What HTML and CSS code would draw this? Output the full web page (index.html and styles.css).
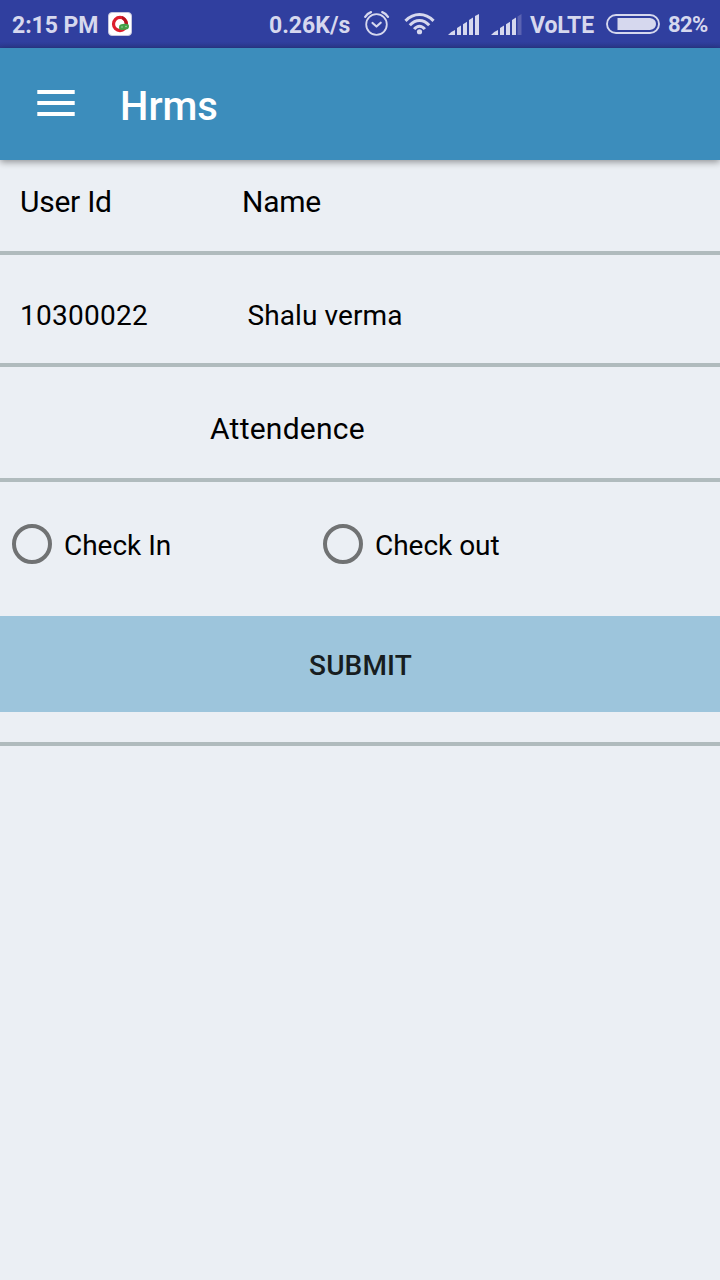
FILE: index.html
```html
<!DOCTYPE html>
<html lang="en">
<head>
<meta charset="utf-8">
<title>Hrms</title>
<link rel="stylesheet" href="styles.css">
</head>
<body>
<div class="status">
  <span class="time">2:15 PM</span>
  <svg class="opera" width="24" height="24" viewBox="0 0 24 24">
    <rect x=".5" y=".5" width="23" height="23" rx="3.5" fill="#fff" stroke="#c5c6de"/>
    <ellipse cx="12" cy="12" rx="6.500" ry="6.700" fill="none" stroke="#dc1f2d" stroke-width="3.200"/>
    <path fill="#b3131f" d="M14 4.200q5 1.500 6 7.800h-3.200q-.2-3.500-2.800-5z"/>
    <path fill="#43a047" d="M11 15.500c0-2.700 1.500-3.500 4-3.500c4-.5 6-.3 6 2.300s-1.500 3.400-5 3.400c-3.500.6-5 .3-5-2.200z"/>
    <circle cx="14" cy="15" r=".7" fill="#b5e0b7"/><circle cx="18" cy="14.500" r=".7" fill="#b5e0b7"/>
  </svg>
  <span class="speed">0.26K/s</span>
  <svg class="alarm" width="26" height="26" viewBox="0 0 26 26" fill="none" stroke="#d6d8ee">
    <circle cx="12.500" cy="14.500" r="10.300" stroke-width="1.800"/>
    <path stroke-width="2.200" stroke-linecap="round" stroke-linejoin="round" d="M8.500 13l4 3.500l4.200-3.800"/>
    <path stroke-width="2.200" stroke-linecap="round" d="M1.200 6.800Q3.300 3.400 7 2.100M24 6.800Q21.900 3.400 18.200 2.100"/>
  </svg>
  <svg class="wifi" width="31" height="24" viewBox="0 0 32 24" fill="none" stroke="#d6d8ee" stroke-width="3.100">
    <path d="M1.500 8.800Q8 2.300 16 2.300T30.500 8.800M6 13.200Q10.500 8.300 16 8.300T26 13.200M10.500 17.300Q13 14.200 16 14.200T21.500 17.300"/>
    <circle cx="16" cy="20" r="2.700" fill="#d6d8ee" stroke="none"/>
  </svg>
  <svg class="signal" width="32" height="22" viewBox="0 0 32 22" fill="#d6d8ee">
    <path d="M0 21q2-3 7-5v5zM9 14l4-2.500v9.500h-4zM15 10.300l4-2.500V21h-4zM21 6l4-2.500V21h-4zM27 2L31 0v21h-4z"/>
  </svg>
  <svg class="signal second" width="32" height="22" viewBox="0 0 32 22" fill="#d6d8ee">
    <path d="M0 21q2-3 7-5v5zM9 14l4-2.500v9.500h-4zM15 10.300l4-2.500V21h-4zM21 6l4-2.500V21h-4z"/>
    <path fill="#5b63b2" d="M26.500 2.500L30.500 0v21h-4z"/>
  </svg>
  <span class="volte">VoLTE</span>
  <svg class="battery" width="54" height="20" viewBox="0 0 54 20">
    <rect x="1" y="1" width="52" height="18" rx="9" fill="none" stroke="#d6d8ee" stroke-width="1.900"/>
    <path fill="#d6d8ee" d="M11.500 4H44q6 1 6 6t-6 6H11.500z"/>
  </svg>
  <span class="percent">82%</span>
</div>
<header class="appbar">
  <svg class="menu" width="38" height="26" viewBox="0 0 38 26" fill="#fff">
    <path d="M.3 0h37.400v4H.3zM.3 11h37.400v4H.3zM.3 22h37.400v4H.3z"/>
  </svg>
  <h1 class="title">Hrms</h1>
</header>
<main>
  <div class="row labels"><span class="col">User Id</span><span>Name</span></div>
  <div class="row values"><span class="col">10300022</span><span>Shalu verma</span></div>
  <div class="row heading">Attendence</div>
  <div class="choices">
    <div class="choice"><span class="radio"></span><span class="label">Check In</span></div>
    <div class="choice"><span class="radio"></span><span class="label">Check out</span></div>
  </div>
  <button class="submit">SUBMIT</button>
  <div class="rule"></div>
</main>
</body>
</html>
```
FILE: styles.css
```css
* { box-sizing: border-box; }
body {
  margin: 0;
  min-height: 1280px;
  background: #ebeff4;
  color: #000;
  font-family: Roboto, sans-serif;
  overflow: hidden;
}
.status {
  display: flex;
  align-items: flex-start;
  height: 48px;
  padding-top: 10px;
  background: linear-gradient(#303f9f 0 42px, #2b398f 48px);
  color: #d6d8ee;
  font-size: 23px;
  font-weight: 700;
  line-height: 32px;
  white-space: nowrap;
}
.status svg { flex: none; }
.time { width: 97px; padding-left: 12px; letter-spacing: -.05px; }
.opera { margin: 2px 0 0 11px; }
.speed { width: 95px; margin-left: 137px; }
.alarm { margin-top: 0; }
.wifi { margin: 2px 0 0 14px; }
.signal { margin: 4px 0 0 13px; }
.signal.second { margin-left: 11px; }
.volte { width: 76px; margin-left: 7px; letter-spacing: -.1px; }
.battery { margin-top: 4px; }
.percent { margin-left: 8px; font-size: 22px; line-height: 30px; letter-spacing: -.6px; }
.appbar {
  position: relative;
  display: flex;
  height: 112px;
  padding-left: 37px;
  background: #3c8dbc;
  color: #fff;
  box-shadow: 0 2px 7px rgba(0, 0, 0, .4);
}
.menu { margin-top: 42px; }
.title { margin: 39px 0 0 45px; font-size: 40px; font-weight: 500; line-height: 40px; }
.row {
  display: flex;
  border-bottom: 4px solid #b0bbbd;
  line-height: 40px;
}
.col { width: 222px; }
.labels { height: 95px; padding: 22px 0 0 20px; font-size: 30px; letter-spacing: -.25px; }
.values { height: 112px; padding: 41px 0 0 20px; font-size: 28px; letter-spacing: .1px; }
.values .col { width: 227.5px; letter-spacing: .25px; }
.heading { height: 115px; padding: 42px 0 0 210px; font-size: 30px; letter-spacing: .25px; }
.choices { display: flex; height: 134px; padding: 42px 0 0 12px; }
.choice { display: flex; width: 311px; height: 40px; }
.radio { width: 40px; height: 40px; border: 4px solid #707273; border-radius: 50%; }
.label { padding: 2px 0 0 12px; font-size: 28px; line-height: 40px; letter-spacing: -.02px; }
.submit {
  display: block;
  width: 100%;
  height: 96px;
  padding: 4px 0 0 1px;
  border: 0;
  background: #9dc5dc;
  color: #171d20;
  font: 500 28px/40px Roboto, sans-serif;
  letter-spacing: .15px;
}
.rule { height: 4px; margin-top: 30px; background: #b0bbbd; }
```
